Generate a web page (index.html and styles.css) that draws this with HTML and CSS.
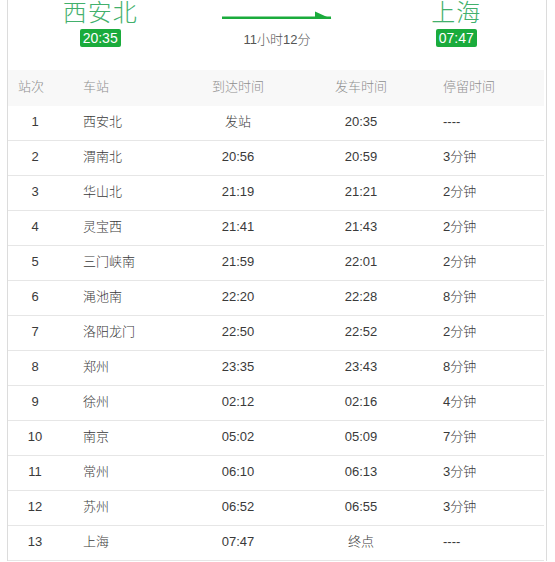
FILE: index.html
```html
<!DOCTYPE html>
<html lang="zh">
<head>
<meta charset="utf-8">
<title>西安北 - 上海</title>
<link rel="stylesheet" href="styles.css">
</head>
<body>
<div class="page">
  <div class="trip">
    <div class="end end-from">
      <div class="city">西安北</div>
      <div class="badge">20:35</div>
    </div>
    <div class="mid">
      <svg class="arrow" width="110" height="10" viewBox="0 0 110 10">
        <rect x="0" y="6.5" width="109" height="2.5" fill="#1aab3c"/>
        <polygon points="93,1.5 109.5,9 93,9" fill="#1aab3c"/>
      </svg>
      <div class="duration">11小时12分</div>
    </div>
    <div class="end">
      <div class="city">上海</div>
      <div class="badge">07:47</div>
    </div>
  </div>
  <div class="table">
    <div class="row head">
      <div class="c1 h1">站次</div><div class="c2">车站</div><div class="c3">到达时间</div><div class="c4">发车时间</div><div class="c5">停留时间</div>
    </div>
    <div class="row"><div class="c1">1</div><div class="c2">西安北</div><div class="c3">发站</div><div class="c4">20:35</div><div class="c5">----</div></div>
    <div class="row"><div class="c1">2</div><div class="c2">渭南北</div><div class="c3">20:56</div><div class="c4">20:59</div><div class="c5">3分钟</div></div>
    <div class="row"><div class="c1">3</div><div class="c2">华山北</div><div class="c3">21:19</div><div class="c4">21:21</div><div class="c5">2分钟</div></div>
    <div class="row"><div class="c1">4</div><div class="c2">灵宝西</div><div class="c3">21:41</div><div class="c4">21:43</div><div class="c5">2分钟</div></div>
    <div class="row"><div class="c1">5</div><div class="c2">三门峡南</div><div class="c3">21:59</div><div class="c4">22:01</div><div class="c5">2分钟</div></div>
    <div class="row"><div class="c1">6</div><div class="c2">渑池南</div><div class="c3">22:20</div><div class="c4">22:28</div><div class="c5">8分钟</div></div>
    <div class="row"><div class="c1">7</div><div class="c2">洛阳龙门</div><div class="c3">22:50</div><div class="c4">22:52</div><div class="c5">2分钟</div></div>
    <div class="row"><div class="c1">8</div><div class="c2">郑州</div><div class="c3">23:35</div><div class="c4">23:43</div><div class="c5">8分钟</div></div>
    <div class="row"><div class="c1">9</div><div class="c2">徐州</div><div class="c3">02:12</div><div class="c4">02:16</div><div class="c5">4分钟</div></div>
    <div class="row"><div class="c1">10</div><div class="c2">南京</div><div class="c3">05:02</div><div class="c4">05:09</div><div class="c5">7分钟</div></div>
    <div class="row"><div class="c1">11</div><div class="c2">常州</div><div class="c3">06:10</div><div class="c4">06:13</div><div class="c5">3分钟</div></div>
    <div class="row"><div class="c1">12</div><div class="c2">苏州</div><div class="c3">06:52</div><div class="c4">06:55</div><div class="c5">3分钟</div></div>
    <div class="row"><div class="c1">13</div><div class="c2">上海</div><div class="c3">07:47</div><div class="c4">终点</div><div class="c5">----</div></div>
  </div>
</div>
</body>
</html>
```
FILE: styles.css
```css
html, body {
  margin: 0;
  padding: 0;
  background: #fff;
}
body {
  font-family: "Liberation Sans", "Noto Sans CJK SC", sans-serif;
  color: #3a3a3a;
  font-size: 13px;
}
.page {
  margin-left: 7px;
  width: 538px;
  border-left: 1px solid #dcdcdc;
  border-right: 1px solid #dcdcdc;
}
.trip {
  height: 70px;
  display: grid;
  grid-template-columns: 1fr 1fr 1fr;
}
.end {
  display: flex;
  flex-direction: column;
  align-items: center;
}
.end-from {
  padding-left: 5px;
}
.city {
  font-size: 24px;
  font-weight: 300;
  line-height: 26px;
  height: 28px;
  color: #42b06c;
  letter-spacing: 1px;
}
.badge {
  margin-top: 1px;
  background: #1aab3c;
  color: #fff;
  font-size: 14px;
  line-height: 18px;
  padding: 0 3px;
  border-radius: 2px;
}
.mid {
  display: flex;
  flex-direction: column;
  align-items: center;
}
.arrow {
  display: block;
  margin-top: 10px;
}
.duration {
  margin-top: 11px;
  line-height: 18px;
  font-size: 13px;
  font-weight: 300;
  color: #555;
}
.table {
  width: 536px;
  font-weight: 300;
}
.row {
  box-sizing: border-box;
  display: grid;
  grid-template-columns: 54px 116px 120px 126px 120px;
  align-items: center;
  height: 35px;
  padding-bottom: 3px;
  line-height: 16px;
  border-bottom: 1px solid #e6e6e6;
}
.row.head {
  height: 36px;
  border-bottom: none;
  background: #f8f8f8;
  color: #8f8f8f;
}
.c1 { text-align: center; }
.c1.h1 { text-align: left; padding-left: 10px; }
.c2 { padding-left: 21px; }
.c3 { text-align: center; }
.c4 { text-align: center; }
.c5 { padding-left: 19px; }
```
